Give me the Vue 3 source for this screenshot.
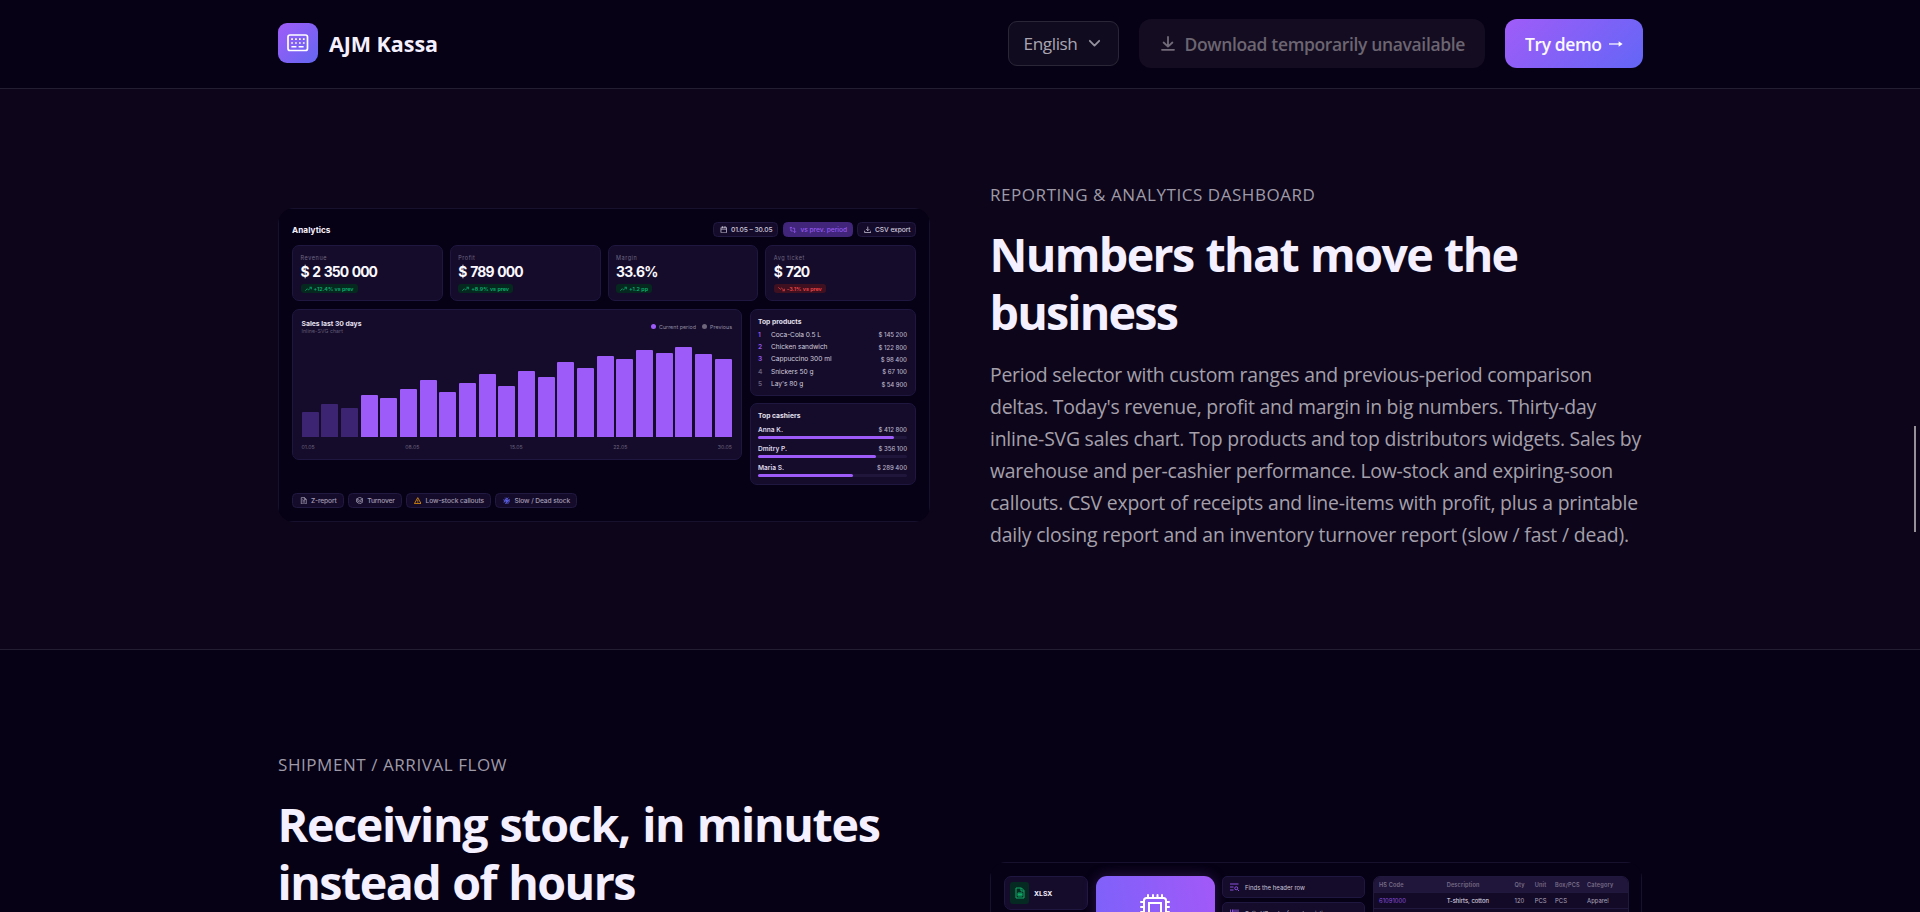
<script setup>
// Spreads a line's letters so that it spans the given width in pixels.
const vFit = {
  mounted(el, { value }) {
    el.style.letterSpacing = '0px'
    const w = el.getBoundingClientRect().width
    const n = el.textContent.length
    el.style.letterSpacing = ((value - w) / n).toFixed(4) + 'px'
  }
}

const kpis = [
  { label: 'Revenue', value: '$ 2 350 000', delta: '+12.4% vs prev', w: [26.5, 76.5, 40] },
  { label: 'Profit', value: '$ 789 000', delta: '+8.9% vs prev', w: [17.2, 64.5, 37.7] },
  { label: 'Margin', value: '33.6%', delta: '+1.2 pp', w: [21.3, 41.7, 19] },
  { label: 'Avg ticket', value: '$ 720', delta: '-3.1% vs prev', down: true, w: [31, 35.5, 35] }
]
const bars = [24.5, 33, 29, 42, 39, 48, 57, 45, 54, 63, 51, 66, 60, 75, 69, 81, 78, 87, 84, 90, 83, 78]
const products = [
  ['Coca-Cola 0.5 L', '$ 145 200', 50, 28.5],
  ['Chicken sandwich', '$ 122 800', 56.5, 28.5],
  ['Cappuccino 300 ml', '$ 98 400', 60.5, 26.3],
  ['Snickers 50 g', '$ 67 100', 42.5, 24.8],
  ["Lay's 80 g", '$ 54 900', 32.3, 25.6]
]
const cashiers = [
  ['Anna K.', '$ 412 800', 91.5, 25, 28.5],
  ['Dmitry P.', '$ 356 100', 79, 29, 28.5],
  ['Maria S.', '$ 289 400', 63.7, 26, 30]
]
const body = [
  ['Period selector with custom ranges and previous-period comparison', 602],
  ["deltas. Today's revenue, profit and margin in big numbers. Thirty-day", 606],
  ['inline-SVG sales chart. Top products and top distributors widgets. Sales by', 651],
  ['warehouse and per-cashier performance. Low-stock and expiring-soon', 623],
  ['callouts. CSV export of receipts and line-items with profit, plus a printable', 648],
  ['daily closing report and an inventory turnover report (slow / fast / dead).', 639]
]
</script>

<template>
  <div class="page">
    <header class="top">
      <div class="brand">
        <span class="logo">
          <svg width="22" height="18" viewBox="0 0 22 18" fill="none" stroke="#fff">
            <rect x="1" y="1" width="19.5" height="15.5" rx="2" stroke-width="1.7" />
            <path d="M4.2 5.2h1.7M8.1 5.2h1.7M12 5.2h1.7M15.9 5.2h1.7M4.2 9h1.7M8.1 9h1.7M12 9h1.7M15.9 9h1.7" stroke-width="1.7" />
            <path d="M4.4 12.8h5M11.6 12.8h5" stroke-width="1.6" />
          </svg>
        </span>
        <b><span v-fit="109">AJM Kassa</span></b>
      </div>
      <nav>
        <button class="lang"><span v-fit="54">English</span>
          <svg width="13" height="9" viewBox="0 0 13 9" fill="none" stroke="#96919e" stroke-width="1.8" stroke-linecap="round" stroke-linejoin="round"><path d="M1.8 1.8l4.7 4.8 4.7-4.8" /></svg>
        </button>
        <button class="download">
          <svg width="14" height="15" viewBox="0 0 14 15" fill="none" stroke="#716a78" stroke-width="1.8" stroke-linecap="round" stroke-linejoin="round"><path d="M7 1v9.5M2.6 6.500L7 10.700l4.400-4.200M1 13.800h12" /></svg>
          <span v-fit="280.5">Download temporarily unavailable</span>
        </button>
        <button class="demo"><span v-fit="76.5">Try demo</span>
          <svg width="14" height="10" viewBox="0 0 14 10" fill="none" stroke="#fff" stroke-width="1.2"><path d="M0 5h12" /><path d="M9.600 2.200L13.600 5 9.600 7.800z" fill="#fff" stroke="none" /></svg>
        </button>
      </nav>
    </header>

    <section class="band first">
      <div class="shot">
        <div class="frame analytics">
          <div class="a-head">
            <b><span v-fit="38.5">Analytics</span></b>
            <div class="tools">
              <span class="tool t1">
                <svg class="ic" viewBox="0 0 24 24"><rect x="3" y="4" width="18" height="18" rx="2" /><path d="M8 1v6M16 1v6M3 10h18" /></svg>
                <span v-fit="41.5">01.05 – 30.05</span>
              </span>
              <span class="tool t2 on">
                <svg class="ic" viewBox="0 0 24 24"><path d="M2 7l4-4 4 4M6 3v13h6M22 17l-4 4-4-4M18 21V7h-6" /></svg>
                <span v-fit="46.5">vs prev. period</span>
              </span>
              <span class="tool t3">
                <svg class="ic" viewBox="0 0 24 24"><path d="M12 2v13M7 10l5 5 5-5M2 15v6h20v-6" /></svg>
                <span v-fit="35.5">CSV export</span>
              </span>
            </div>
          </div>

          <div class="kpis">
            <div v-for="k in kpis" :key="k.label" class="panel kpi">
              <span class="k-label"><span v-fit="k.w[0]">{{ k.label }}</span></span>
              <b class="k-value"><span v-fit="k.w[1]">{{ k.value }}</span></b>
              <span class="delta" :class="{ down: k.down }">
                <svg width="7" height="6" viewBox="0 0 24 20" fill="none" stroke="currentColor" stroke-width="2.6">
                  <path v-if="k.down" d="M1 4l7 7 4-4 10 9M15 16h7V9" />
                  <path v-else d="M1 16l7-7 4 4L22 4M15 4h7v7" />
                </svg>
                <span v-fit="k.w[2]">{{ k.delta }}</span>
              </span>
            </div>
          </div>

          <div class="main">
            <div class="panel chart">
              <div class="c-head">
                <div class="c-title">
                  <b><span v-fit="60">Sales last 30 days</span></b>
                  <small><span v-fit="41.5">Inline-SVG chart</span></small>
                </div>
                <div class="legend">
                  <i></i><span v-fit="37">Current period</span>
                  <i class="prev"></i><span v-fit="22">Previous</span>
                </div>
              </div>
              <div class="bars">
                <div v-for="(h, i) in bars" :key="i" class="bar" :class="{ dim: i < 3 }" :style="{ height: h + 'px' }"></div>
              </div>
              <div class="axis"><span>01.05</span><span>08.05</span><span>15.05</span><span>22.05</span><span>30.05</span></div>
            </div>

            <div class="side">
              <div class="panel products">
                <b class="p-title"><span v-fit="43.5">Top products</span></b>
                <div v-for="(p, i) in products" :key="p[0]" class="p-row">
                  <em :class="{ low: i > 2 }">{{ i + 1 }}</em>
                  <span class="name"><span v-fit="p[2]">{{ p[0] }}</span></span>
                  <span class="sum"><span v-fit="p[3]">{{ p[1] }}</span></span>
                </div>
              </div>
              <div class="panel cashiers">
                <b class="p-title"><span v-fit="42.5">Top cashiers</span></b>
                <div v-for="c in cashiers" :key="c[0]" class="c-row">
                  <div class="c-line"><strong v-fit="c[3]">{{ c[0] }}</strong><span class="sum"><span v-fit="c[4]">{{ c[1] }}</span></span></div>
                  <div class="track"><div class="fill" :style="{ width: c[2] + '%' }"></div></div>
                </div>
              </div>
            </div>
          </div>

          <div class="chips">
            <span class="tool c1">
              <svg class="ic" viewBox="0 0 24 24"><path d="M4 2h11l5 5v15H4zM14 2v6h6M8 12h8M8 16h8M8 8h2" /></svg>
              <span v-fit="25.7">Z-report</span>
            </span>
            <span class="tool c2">
              <svg class="ic" viewBox="0 0 24 24"><path d="M12 1l10 5-10 5L2 6zM2 11l10 5 10-5M2 16l10 6 10-6V6M2 6v10" /></svg>
              <span v-fit="27.5">Turnover</span>
            </span>
            <span class="tool c3">
              <svg class="ic warn" viewBox="0 0 24 24"><path d="M12 2L1.500 21h21zM12 9v6M12 17v2" /></svg>
              <span v-fit="58.5">Low-stock callouts</span>
            </span>
            <span class="tool c4">
              <svg class="ic snow" viewBox="0 0 24 24"><path d="M12 2v20M2 12h20M7 2l5 5 5-5M7 22l5-5 5 5M2 7l5 5-5 5M22 7l-5 5 5 5M6 6l12 12M18 6L6 18" /></svg>
              <span v-fit="55.7">Slow / Dead stock</span>
            </span>
          </div>
        </div>
      </div>

      <div class="copy">
        <p class="eyebrow"><span v-fit="325.5">REPORTING &amp; ANALYTICS DASHBOARD</span></p>
        <h2><span v-fit="528">Numbers that move the</span><br /><span v-fit="187.5">business</span></h2>
        <p class="text"><template v-for="l in body" :key="l[0]"><span v-fit="l[1]">{{ l[0] }}</span><br /></template></p>
      </div>
    </section>

    <section class="band second">
      <div class="copy">
        <p class="eyebrow"><span v-fit="229">SHIPMENT / ARRIVAL FLOW</span></p>
        <h2><span v-fit="602">Receiving stock, in minutes</span><br /><span v-fit="357.5">instead of hours</span></h2>
      </div>
      <div class="shot lower">
        <div class="frame flow">
          <div class="panel file">
            <span class="f-icon">
              <svg width="10" height="12" viewBox="0 0 20 24" fill="none" stroke="#12a866" stroke-width="2"><path d="M2 2h11l5 5v15H2zM12 2v6h6M6 12h8v6H6zM10 12v6M6 15h8" /></svg>
            </span>
            <b><span v-fit="18.3">XLSX</span></b>
          </div>
          <div class="engine">
            <svg width="30" height="30" viewBox="0 0 30 30" fill="none" stroke="#fff" stroke-width="2" stroke-linecap="round">
              <rect x="4" y="4" width="22" height="22" rx="2.500" /><rect x="9" y="9" width="12" height="12" />
              <path d="M8 4V1M13 4V1M17.500 4V1M22 4V1M4 8H1M4 13H1M4 18H1M4 23H1M26 8h3M26 13h3M26 18h3M26 23h3" />
            </svg>
          </div>
          <div class="steps">
            <div class="panel step">
              <svg width="9" height="9" viewBox="0 0 18 18" fill="none" stroke="#8b50df" stroke-width="2"><path d="M0 2h17M0 8h7M0 14h7" /><circle cx="12.500" cy="10.500" r="3" /><path d="M15 13l3 3" /></svg>
              <span v-fit="60">Finds the header row</span>
            </div>
            <div class="panel step">
              <svg width="9" height="9" viewBox="0 0 18 18" fill="none" stroke="#8b50df" stroke-width="2"><path d="M1 1v15M5 1v15M8 1v15M12 1v15M16 1v15" /></svg>
              <span v-fit="84">Splits HS codes from description</span>
            </div>
          </div>
          <div class="table">
            <div class="tr th"><span>HS Code</span><span>Description</span><span>Qty</span><span>Unit</span><span>Box/PCS</span><span>Category</span></div>
            <div class="tr"><span class="code">61091000</span><span class="desc">T-shirts, cotton</span><span>120</span><span>PCS</span><span>PCS</span><span>Apparel</span></div>
            <div class="tr"></div>
          </div>
        </div>
      </div>
    </section>
    <div class="scroll"></div>
  </div>
</template>

<style>
body { background: #060115; overflow: hidden; }
</style>

<style scoped>
* { box-sizing: border-box; }
.page { position: relative; width: 1920px; height: 912px; overflow: hidden; background: #060115; color: #f5f0ff; font-family: "Open Sans", "Noto Sans", sans-serif; }
span, b, strong { white-space: pre; }
.top { height: 89px; padding: 0 277px 0 278px; display: flex; justify-content: space-between; align-items: flex-start; border-bottom: 1px solid #241e33; }
.brand { display: flex; align-items: center; gap: 11px; margin-top: 23px; height: 40px; font-size: 21.500px; }
.brand b { line-height: 40px; padding-top: 1px; }
.logo { width: 40px; height: 40px; border-radius: 9px; background: linear-gradient(135deg, #a05cf8, #6366f1); display: flex; align-items: center; justify-content: center; padding-right: 1px; }
nav { display: flex; align-items: center; gap: 20px; margin-top: 19px; height: 49px; }
button { font-family: inherit; border: 0; display: flex; align-items: center; border-radius: 12px; height: 49px; white-space: pre; }
.lang { width: 111px; height: 45px; border: 1px solid #2b2637; border-radius: 9px; background: #110b20; color: #aaa5b1; font-size: 17.200px; padding: 0 0 0 14.500px; gap: 10px; }
.download { width: 346px; background: #140c20; color: #6c6572; font-weight: 600; font-size: 17.500px; padding: 0 0 0 21.500px; gap: 10px; }
.demo { width: 138px; background: linear-gradient(135deg, #a05cf8, #6366f6); color: #fbf8ff; font-weight: 600; font-size: 17.500px; padding: 0 0 0 20px; gap: 7px; }

.band { display: flex; gap: 60px; padding: 0 278px; align-items: flex-start; }
.first { height: 561px; background: #0d061a; border-bottom: 1px solid #241e33; }
.copy { width: 652px; padding-top: 92px; }
.second .copy { padding-top: 101px; }
p, h2 { margin: 0; }
.eyebrow { font-size: 17px; line-height: 28px; color: #9f9aa8; }
h2 { font-size: 46.600px; line-height: 58px; font-weight: 700; margin-top: 16px; margin-left: -.5px; word-spacing: 1.500px; color: #f5f0ff; }
.text { font-size: 19.400px; line-height: 32px; color: #a5a0ac; margin-top: 18px; }

.shot { width: 652px; height: 314px; margin-top: 119px; border-radius: 16px; overflow: hidden; flex: none; }
.lower { margin-top: 212px; height: 360px; }
.frame { width: 652px; height: 100%; border: 1px solid #18112e; background: #060114; font-family: Inter, sans-serif; }
.panel { background: #150c2b; border: 1px solid #1f1740; border-radius: 7px; }
.analytics { padding: 13px; display: flex; flex-direction: column; }
.a-head { display: flex; justify-content: space-between; height: 15px; align-items: center; font-size: 8.200px; }
.tools, .chips { display: flex; gap: 4.500px; }
.tool { height: 15px; border: 1px solid #211940; background: #140b2a; border-radius: 4.500px; display: flex; align-items: center; gap: 4px; padding-left: 5.500px; font-size: 6.700px; font-weight: 500; color: #cfc9dc; }
.t1 { width: 65px; } .t2 { width: 70px; } .t3 { width: 59px; }
.on { background: #40257a; border-color: #40257a; color: #9558ef; }
.ic { width: 7.500px; height: 7.500px; flex: none; fill: none; stroke: currentColor; stroke-width: 2.500; }
.chips { margin-top: auto; }
.chips .tool { padding-left: 6.500px; color: #a39cb3; }
.c1 { width: 51.700px; } .c2 { width: 53.800px; } .c3 { width: 84.500px; } .c4 { width: 81.500px; }
.chips .warn { stroke: #f59e0b; } .chips .snow { stroke: #6366f1; }

.kpis { display: grid; grid-template-columns: repeat(4, 1fr); gap: 7px; margin-top: 8px; }
.kpi { height: 56px; padding: 8px 7.500px 0; display: flex; flex-direction: column; align-items: flex-start; }
.k-label { font-size: 5.500px; line-height: 8px; color: #6f6781; }
.k-value { font-size: 13.900px; line-height: 18px; margin-top: 1px; word-spacing: 1.400px; color: #fbf9ff; }
.delta { height: 9px; margin-top: 3px; padding: 0 4px; border-radius: 3px; background: #06291f; color: #06b070; font-size: 5.400px; font-weight: 600; display: flex; align-items: center; gap: 2px; }
.down { background: #3f1020; color: #ef4444; }

.main { display: flex; gap: 8px; margin-top: 8px; align-items: flex-start; }
.chart { width: 450px; height: 151px; padding: 8px 9px 0 8.500px; }
.c-head { display: flex; justify-content: space-between; height: 27.500px; }
.c-title { display: flex; flex-direction: column; font-size: 6.800px; line-height: 9px; padding-top: .500px; color: #e8e3f2; }
.c-title small { font-size: 5.200px; line-height: 7px; color: #645c77; }
.legend { display: flex; align-items: center; height: 17px; font-size: 5.300px; color: #938ca3; }
.legend i { width: 5px; height: 5px; border-radius: 50%; background: #9d5cfa; margin-right: 3px; }
.legend .prev { margin-left: 6px; background: #6e667a; }
.bars { display: flex; align-items: flex-end; justify-content: space-between; height: 91px; }
.bar { width: 17.200px; background: #9d5cfa; border-radius: 1px 1px 0 0; }
.dim { background: #3d2473; }
.axis { display: flex; justify-content: space-between; margin-top: 7px; font-size: 5.200px; line-height: 7px; color: #6a627c; }

.side { width: 166px; display: flex; flex-direction: column; gap: 7px; }
.products { height: 87px; padding: 7px 8px 0 7px; }
.p-title { display: block; font-size: 6.700px; line-height: 10px; color: #e8e3f2; }
.products .p-title { margin-bottom: 1.400px; }
.p-row { display: flex; height: 12.450px; align-items: center; font-size: 6.600px; color: #d2ccdf; }
.p-row em { width: 13px; font-style: normal; font-weight: 600; color: #9558ef; }
.p-row .low { color: #6a627d; }
.sum { margin-left: auto; font-size: 6px; font-weight: 500; color: #b9b2c6; }
.cashiers { height: 82px; padding: 7px 8px 0 7px; }
.c-row { height: 19px; padding-top: 3px; }
.c-line { display: flex; align-items: center; height: 11px; font-size: 6.600px; color: #ded8ea; }
.c-line strong { font-weight: 600; }
.track { height: 3px; border-radius: 2px; background: #20163c; margin-top: .500px; }
.fill { height: 3px; border-radius: 2px; background: #9d5cfa; }

.flow { padding: 13px 12px 0 13px; display: flex; align-items: flex-start; }
.file { width: 83.500px; height: 34px; display: flex; align-items: center; gap: 5px; padding-left: 5px; font-size: 6.800px; }
.f-icon { width: 19px; height: 22px; border-radius: 3px; background: #052a22; display: flex; align-items: center; justify-content: center; }
.engine { width: 119px; height: 200px; margin-left: 8px; border-radius: 11px; background: linear-gradient(80deg, #7663fa, #a259f8); box-shadow: 0 0 14px #7540c055; display: flex; justify-content: center; padding-top: 18px; }
.steps { width: 143px; margin-left: 7.500px; display: flex; flex-direction: column; gap: 4px; }
.step { height: 22px; border-radius: 5px; display: flex; align-items: center; gap: 6px; padding-left: 7px; font-size: 6px; color: #cac4d6; }
.table { width: 255.500px; margin-left: 8px; border: 1px solid #21183e; border-radius: 7px; overflow: hidden; background: #130a28; }
.tr { display: grid; grid-template-columns: 67.700px 67.800px 20.300px 20.300px 32px 1fr; height: 16px; align-items: center; padding-left: 5px; font-size: 5.900px; color: #aca5ba; border-bottom: 1px solid #21183e; }
.th { background: #20153b; color: #776e87; font-size: 5.600px; font-weight: 600; letter-spacing: .15px; }
.code { color: #8b50df; } .desc { color: #e6e0f0; }
.scroll { position: absolute; left: 1914px; top: 426px; width: 2px; height: 106px; background: #969198; }
</style>
